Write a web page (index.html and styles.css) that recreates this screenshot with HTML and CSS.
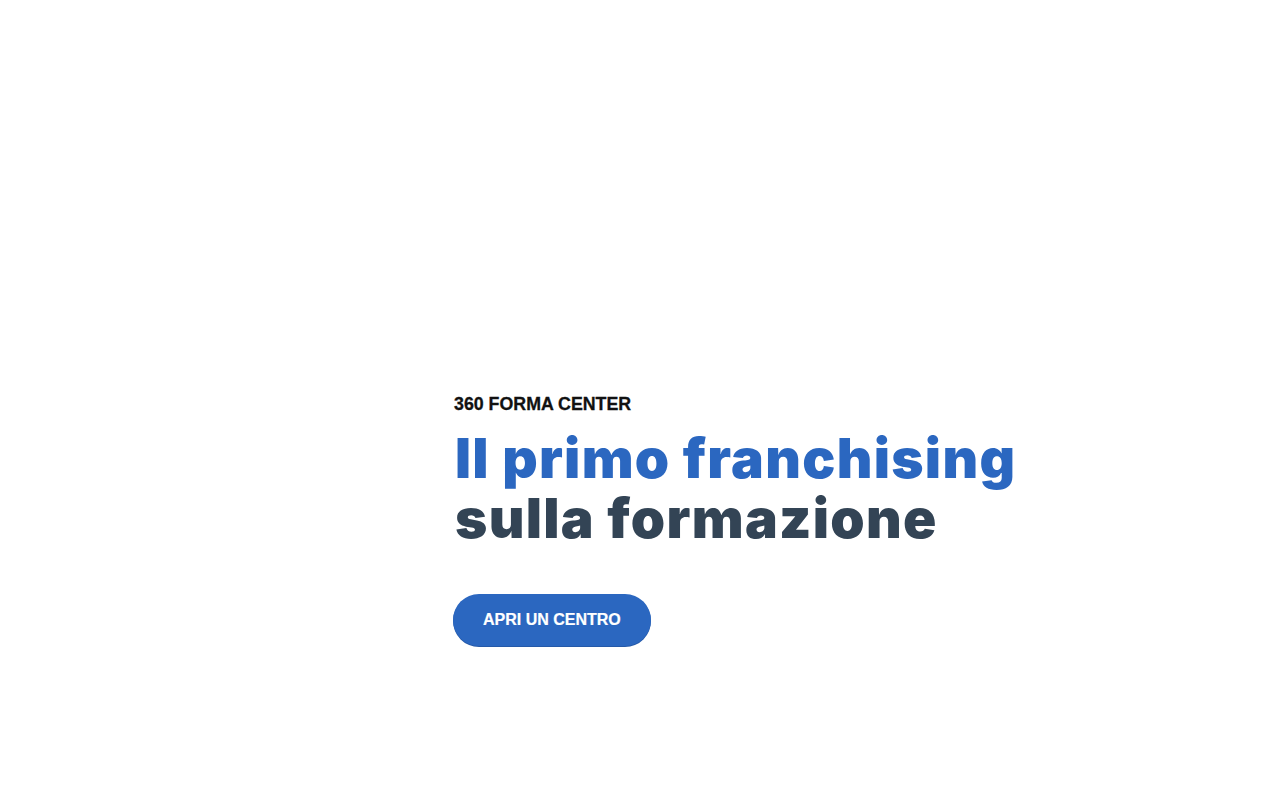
FILE: index.html
```html
<!DOCTYPE html>
<html lang="it">
<head>
<meta charset="utf-8">
<title>360 Forma Center</title>
<link rel="stylesheet" href="styles.css">
</head>
<body>
<section class="hero">
  <div class="hero-content">
    <p class="eyebrow">360 FORMA CENTER</p>
    <h1 class="title"><span class="title-blue">Il primo franchising</span><span class="title-dark">sulla formazione</span></h1>
    <a class="cta" href="#">APRI UN CENTRO</a>
  </div>
</section>
</body>
</html>
```

FILE: styles.css
```css
html, body {
  margin: 0;
  padding: 0;
  background: #ffffff;
}
body {
  font-family: "Liberation Sans", Arial, sans-serif;
  width: 1280px;
  height: 800px;
  overflow: hidden;
}
.hero {
  display: flex;
  padding: 392px 0 0 453px;
}
.hero-content {
  display: flex;
  flex-direction: column;
  align-items: flex-start;
}
.eyebrow {
  margin: 0 0 0 1px;
  font-size: 17.8px;
  font-weight: 700;
  line-height: 24px;
  color: #111111;
  -webkit-text-stroke: 0.3px #111111;
}
.title {
  margin: 12px 0 0 2px;
  font-family: Inter, "Liberation Sans", Arial, sans-serif;
  font-size: 55px;
  font-weight: 900;
  line-height: 60px;
  letter-spacing: 1.3px;
  display: flex;
  flex-direction: column;
}
.title-blue {
  color: #2b67c0;
}
.title-dark {
  color: #334455;
}
.cta {
  margin-top: 46px;
  display: inline-flex;
  align-items: center;
  justify-content: center;
  height: 52px;
  padding: 0 30px;
  box-sizing: border-box;
  border-radius: 26px;
  background: #2b67c0;
  box-shadow: 0 1px 0 #2559a8;
  color: #ffffff;
  font-size: 16px;
  font-weight: 700;
  text-decoration: none;
  -webkit-text-stroke: 0.2px #ffffff;
}
```
